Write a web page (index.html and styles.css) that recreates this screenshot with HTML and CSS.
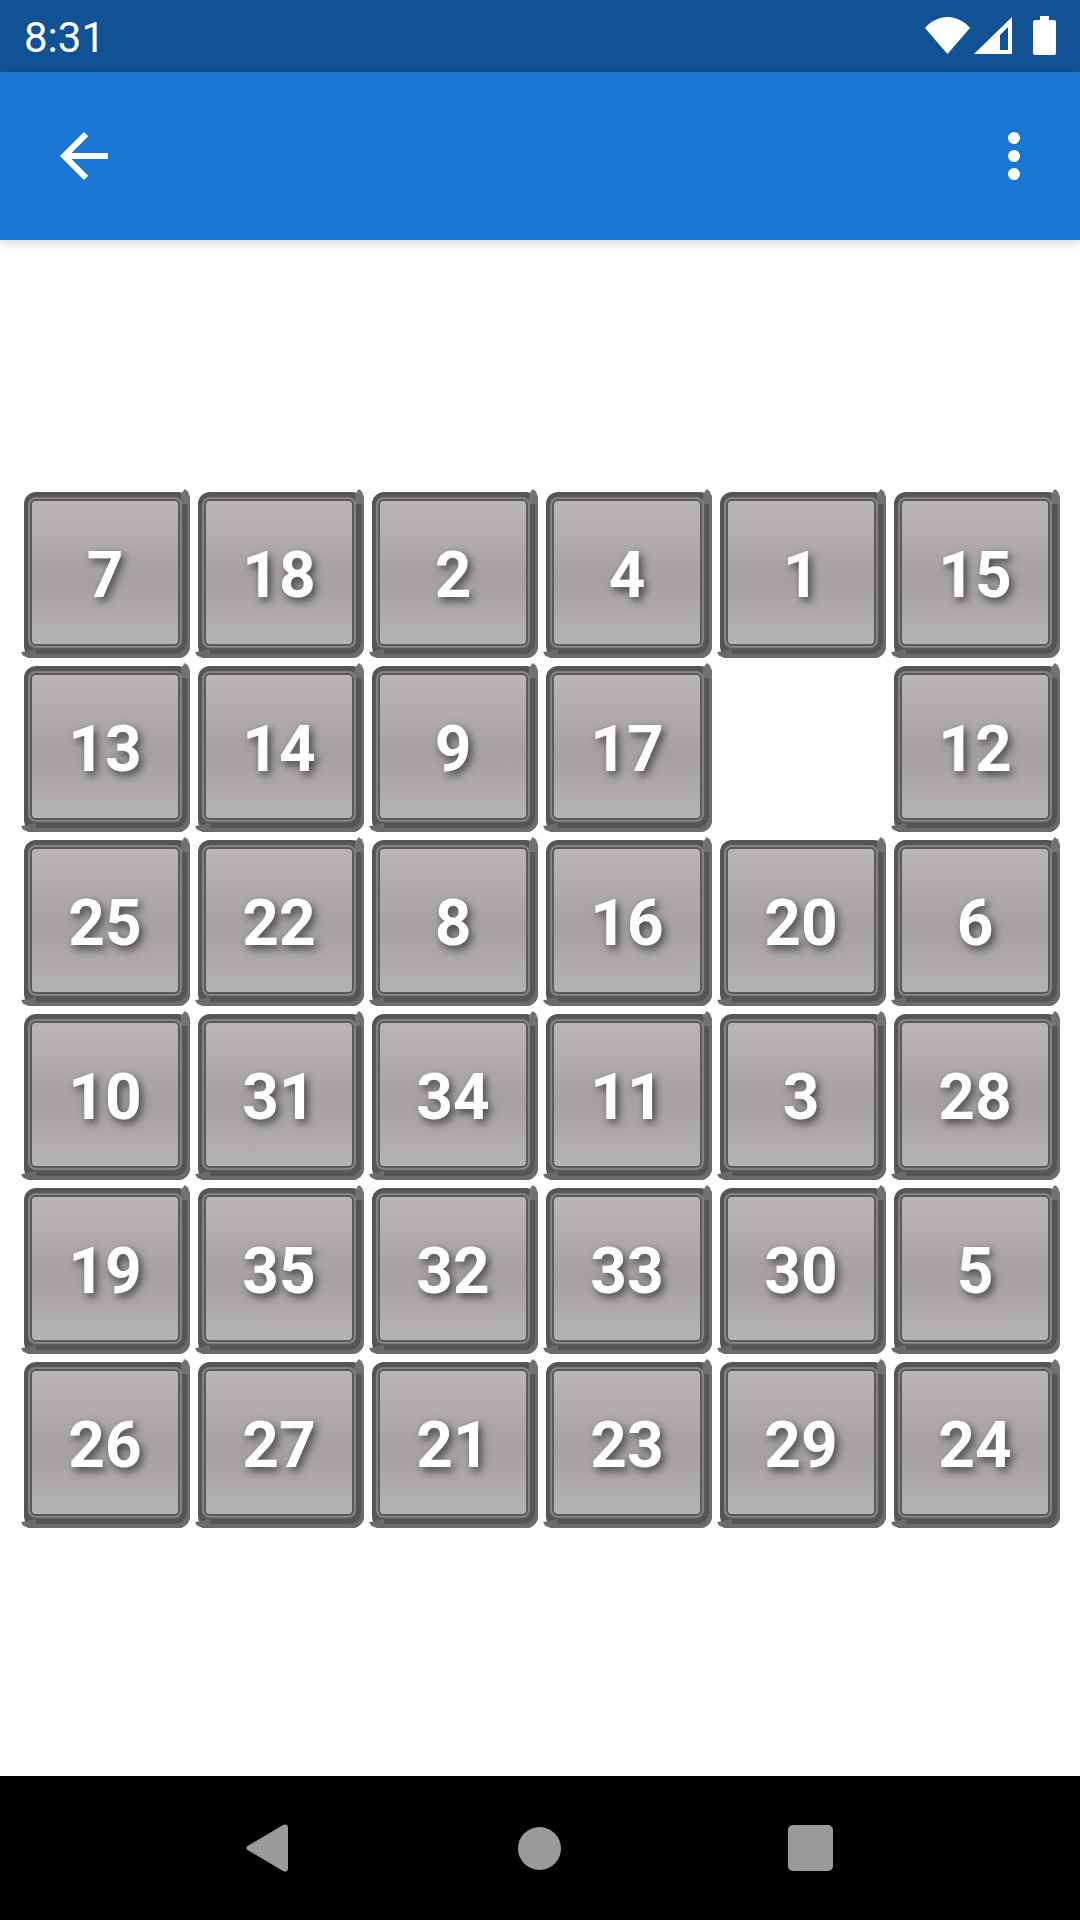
FILE: index.html
```html
<!DOCTYPE html>
<html>
<head>
<meta charset="utf-8">
<title>Puzzle</title>
<link rel="stylesheet" href="styles.css">
</head>
<body>
<div class="status">
  <span class="time">8:31</span>
  <div class="status-icons">
    <svg class="wifi" width="45" height="37" viewBox="0 0 45 37"><path d="M0 11 C6 4 14 0 22.5 0 C31 0 39 4 45 11 L22.5 37 Z" fill="#fff"/></svg>
    <svg class="signal" width="38" height="37" viewBox="0 0 38 37"><path fill-rule="evenodd" d="M38 0 V37 H0 Z M34 10 L26 18 V33 H34 Z" fill="#fff"/></svg>
    <svg class="battery" width="23" height="39" viewBox="0 0 23 39"><path d="M7 0 H16 V4 H21 A2 2 0 0 1 23 6 V37 A2 2 0 0 1 21 39 H2 A2 2 0 0 1 0 37 V6 A2 2 0 0 1 2 4 H7 Z" fill="#fff"/></svg>
  </div>
</div>
<header class="appbar">
  <svg width="48" height="48" viewBox="8 8 32 32"><path d="M40 22H15.66l11.17-11.17L24 8 8 24l16 16 2.83-2.83L15.66 26H40v-4z" fill="#fff"/></svg>
  <svg width="12" height="48" viewBox="0 0 12 48"><circle cx="6" cy="6" r="6" fill="#fff"/><circle cx="6" cy="24" r="6" fill="#fff"/><circle cx="6" cy="42" r="6" fill="#fff"/></svg>
</header>
<main class="board">
  <div class="tile"><div class="face">7</div></div><div class="tile"><div class="face">18</div></div><div class="tile"><div class="face">2</div></div><div class="tile"><div class="face">4</div></div><div class="tile"><div class="face">1</div></div><div class="tile"><div class="face">15</div></div>
  <div class="tile"><div class="face">13</div></div><div class="tile"><div class="face">14</div></div><div class="tile"><div class="face">9</div></div><div class="tile"><div class="face">17</div></div><div class="empty"></div><div class="tile"><div class="face">12</div></div>
  <div class="tile"><div class="face">25</div></div><div class="tile"><div class="face">22</div></div><div class="tile"><div class="face">8</div></div><div class="tile"><div class="face">16</div></div><div class="tile"><div class="face">20</div></div><div class="tile"><div class="face">6</div></div>
  <div class="tile"><div class="face">10</div></div><div class="tile"><div class="face">31</div></div><div class="tile"><div class="face">34</div></div><div class="tile"><div class="face">11</div></div><div class="tile"><div class="face">3</div></div><div class="tile"><div class="face">28</div></div>
  <div class="tile"><div class="face">19</div></div><div class="tile"><div class="face">35</div></div><div class="tile"><div class="face">32</div></div><div class="tile"><div class="face">33</div></div><div class="tile"><div class="face">30</div></div><div class="tile"><div class="face">5</div></div>
  <div class="tile"><div class="face">26</div></div><div class="tile"><div class="face">27</div></div><div class="tile"><div class="face">21</div></div><div class="tile"><div class="face">23</div></div><div class="tile"><div class="face">29</div></div><div class="tile"><div class="face">24</div></div>
</main>
<nav class="navbar">
  <svg width="42" height="48" viewBox="0 0 42 48"><path d="M1.5 22 L37 1 Q41.5 -1 42 3.5 V44.5 Q41.5 49 37 47 L1.5 26 Q-0.5 24 1.5 22 Z" fill="#9a9a9a"/></svg>
  <div class="home"></div>
  <div class="recent"></div>
</nav>
</body>
</html>
```

FILE: styles.css
```css
* { box-sizing: border-box; }
html, body { margin: 0; padding: 0; }
body {
  width: 1080px;
  height: 1920px;
  background: #fff;
  display: flex;
  flex-direction: column;
  font-family: Roboto, sans-serif;
  overflow: hidden;
}
.status {
  height: 72px;
  background: #105293;
  display: flex;
  justify-content: space-between;
  padding: 0 24px;
  color: #fff;
}
.time { font-size: 42px; line-height: 75px; }
.status-icons { display: flex; align-items: flex-start; }
.wifi { margin: 17px 4px 0 0; }
.signal { margin: 17px 21px 0 0; }
.battery { margin-top: 16px; }
.appbar {
  height: 168px;
  background: #1976d2;
  display: flex;
  align-items: center;
  justify-content: space-between;
  padding: 0 60px;
  box-shadow: 0 3px 10px rgba(0,0,0,.16);
  position: relative;
}
.board {
  flex: 1;
  display: grid;
  grid-template-columns: repeat(6, 166px);
  grid-auto-rows: 166px;
  gap: 8px;
  padding: 252px 0 0 24px;
}
.tile {
  position: relative;
  display: flex;
  padding: 9px 12px 14px 8px;
  border-radius: 12px;
  background: #555;
  box-shadow: inset -3px -4px 1px #6c6c6c;
}
.tile::before {
  content: "";
  position: absolute;
  right: 0;
  top: -3px;
  width: 9px;
  height: 15px;
  background: #727272;
  clip-path: polygon(0 35%, 40% 0, 75% 15%, 100% 50%, 100% 100%, 0 100%);
}
.tile::after {
  content: "";
  position: absolute;
  left: -3px;
  bottom: 0;
  width: 15px;
  height: 9px;
  background: #6a6a6a;
  clip-path: polygon(0 35%, 100% 0, 100% 100%, 50% 100%, 15% 75%);
}
.face {
  flex: 1;
  display: flex;
  align-items: center;
  justify-content: center;
  position: relative;
  z-index: 1;
  padding: 5px 0 0 0;
  border-radius: 4px;
  background: linear-gradient(180deg, #bab6b5 0%, #a4a1a0 55%, #b5b3b2 100%);
  box-shadow: 0 0 0 2px #5a5a5a, 0 0 1px 4px #868686;
  font-weight: 700;
  font-size: 64px;
  color: #fff;
  text-shadow: 3px 4px 8px rgba(0,0,0,.6);
}
.navbar {
  height: 144px;
  background: #000;
  display: flex;
  align-items: center;
  padding-left: 246px;
}
.home {
  width: 43px;
  height: 43px;
  border-radius: 50%;
  background: #9a9a9a;
  margin-left: 230px;
}
.recent {
  width: 45px;
  height: 46px;
  border-radius: 5px;
  background: #9a9a9a;
  margin-left: 227px;
}
```
